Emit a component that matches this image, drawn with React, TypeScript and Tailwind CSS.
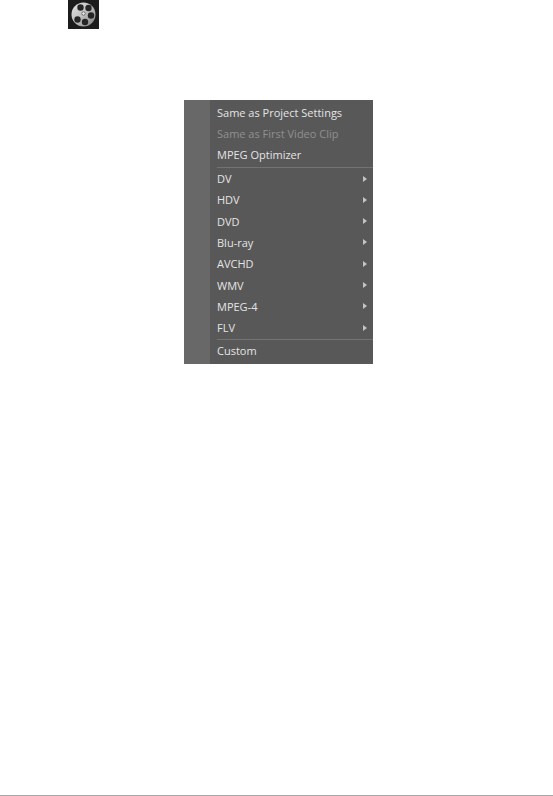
const topItems = [
  { label: 'Same as Project Settings' },
  { label: 'Same as First Video Clip', disabled: true },
  { label: 'MPEG Optimizer' },
];

const formats = ['DV', 'HDV', 'DVD', 'Blu-ray', 'AVCHD', 'WMV', 'MPEG-4', 'FLV'];

function FilmReel() {
  return (
    <div className="w-[31px] h-[29px] bg-[#1c1c1c]">
      <svg width="31" height="29" viewBox="0 0 31 29">
        <defs>
          <linearGradient id="reel" x1="0" y1="0" x2="1" y2="1">
            <stop offset="0" stopColor="#e4e4e4" />
            <stop offset="0.5" stopColor="#c0c0c0" />
            <stop offset="1" stopColor="#7a7a7a" />
          </linearGradient>
        </defs>
        <circle cx="15.5" cy="14.5" r="12" fill="url(#reel)" />
        <circle cx="12.5" cy="7.5" r="3.2" fill="#262626" />
        <circle cx="20.5" cy="8" r="3.2" fill="#262626" />
        <circle cx="23" cy="15.5" r="3.2" fill="#262626" />
        <circle cx="17" cy="22" r="3.2" fill="#262626" />
        <circle cx="9.5" cy="19.5" r="3.2" fill="#262626" />
        <circle cx="15.5" cy="13.5" r="1.7" fill="#f4f4f4" stroke="#555555" strokeWidth="0.8" />
      </svg>
    </div>
  );
}

function MenuRow({ label, disabled, arrow }: { label: string; disabled?: boolean; arrow?: boolean }) {
  return (
    <div className="h-[21.3px] flex items-center justify-between pl-[7px] pr-[6px]">
      <span className={disabled ? 'text-[#909090]' : 'text-[#e4e4e4]'}>{label}</span>
      {arrow && <span className="w-0 h-0 border-y-[3.5px] border-y-transparent border-l-[4px] border-l-[#c4c4c4]" />}
    </div>
  );
}

export default function App() {
  return (
    <div className="h-[796px] bg-white flex flex-col font-['Open_Sans',sans-serif]">
      <div className="pl-[68px]">
        <FilmReel />
      </div>

      <div className="mt-[71px] ml-[184px] w-[189px] h-[264px] bg-[#585858] flex text-[11px] leading-none">
        {/* icon gutter */}
        <div className="w-[26px] bg-[#686868]" />
        <div className="flex-1 pt-[1.5px]">
          {topItems.map((item) => (
            <MenuRow key={item.label} label={item.label} disabled={item.disabled} />
          ))}
          <div className="ml-[7px] mt-[1.5px] h-px bg-[#737373]" />
          {formats.map((f) => (
            <MenuRow key={f} label={f} arrow />
          ))}
          <div className="ml-[7px] mt-[0.5px] mb-[0.5px] h-px bg-[#737373]" />
          <MenuRow label="Custom" />
        </div>
      </div>

      <div className="mt-auto h-px bg-[#a8a8a8]" />
    </div>
  );
}
